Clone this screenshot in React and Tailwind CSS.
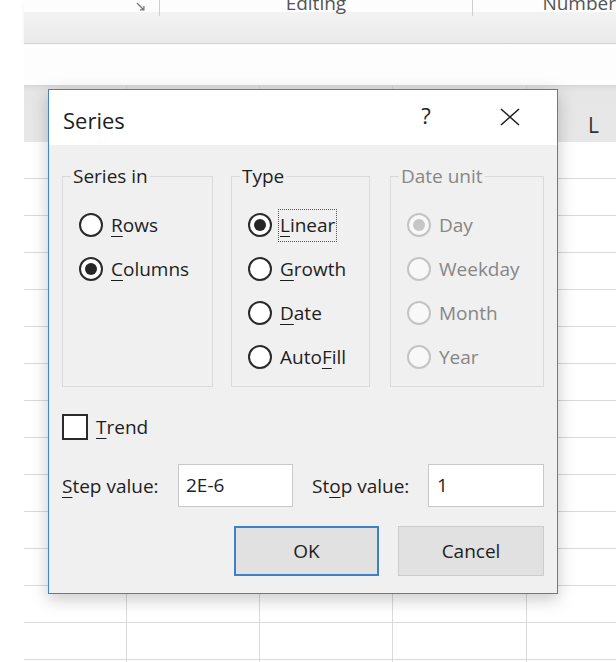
import React from 'react'

const cols = ['w-[103px]', 'w-[133px]', 'w-[133px]', 'w-[134px]']

function Radio({ checked, disabled }) {
  return (
    <span
      className={`flex h-[24px] w-[24px] shrink-0 items-center justify-center rounded-full border-2 ${
        disabled ? 'border-[#c4c4c4] bg-[#f8f8f8]' : 'border-[#2a2a2a] bg-white'
      }`}
    >
      {checked && (
        <span className={`h-[12px] w-[12px] rounded-full ${disabled ? 'bg-[#c6c6c6]' : 'bg-[#262626]'}`} />
      )}
    </span>
  )
}

function Key({ children }) {
  return <span className="underline decoration-1 underline-offset-[4px]">{children}</span>
}

function Option({ checked, disabled, focus, children }) {
  return (
    <div className="flex h-[44px] items-center gap-[6px]">
      <Radio checked={checked} disabled={disabled} />
      <span
        className={`border px-[1px] leading-[31px] ${focus ? 'border-dotted border-[#555]' : 'border-transparent'} ${
          disabled ? 'text-[#868686]' : 'text-[#1e1e1e]'
        }`}
      >
        {children}
      </span>
    </div>
  )
}

function Group({ title, width, disabled, children }) {
  return (
    <fieldset className={`${width} min-w-0 border border-[#dadada] pb-[7px] pl-[8px]`}>
      <legend className={`px-[2px] leading-[26px] ${disabled ? 'text-[#878787]' : 'text-[#1e1e1e]'}`}>{title}</legend>
      <div className="flex flex-col pl-[8px] pt-[14px]">{children}</div>
    </fieldset>
  )
}

function SeriesDialog() {
  return (
    <div className="absolute left-[48px] top-[89px] w-[510px] border border-[#3f84c8] bg-[#f0f0f0] text-[19px] text-[#1e1e1e] shadow-[0_5px_16px_rgba(0,0,0,0.22)]">
      {/* title bar */}
      <div className="flex h-[55px] items-center bg-white pl-[14px]">
        <span className="pt-[5px] text-[22px] text-[#1e1e1e]">Series</span>
        <span className="flex-1" />
        <span className="w-[12px] pb-[5px] text-center text-[22px] text-[#222]">?</span>
        <span className="w-[68px]" />
        <svg width="20" height="18" viewBox="0 0 20 18" className="mb-[2px] mr-[37px]">
          <path d="M1 1 L19 17 M19 1 L1 17" stroke="#222" strokeWidth="1.6" fill="none" />
        </svg>
      </div>

      <div className="flex flex-col pb-[17px] pl-[13px] pr-[13px] pt-[18px]">
        <div className="flex items-stretch">
          <Group title="Series in" width="w-[151px]">
            <Option>
              <Key>R</Key>ows
            </Option>
            <Option checked>
              <Key>C</Key>olumns
            </Option>
          </Group>
          <div className="w-[18px]" />
          <Group title="Type" width="w-[139px]">
            <Option checked focus>
              <Key>L</Key>inear
            </Option>
            <Option>
              <Key>G</Key>rowth
            </Option>
            <Option>
              <Key>D</Key>ate
            </Option>
            <Option>
              Auto<Key>F</Key>ill
            </Option>
          </Group>
          <div className="w-[20px]" />
          <Group title="Date unit" width="w-[154px]" disabled>
            <Option checked disabled>
              Day
            </Option>
            <Option disabled>Weekday</Option>
            <Option disabled>Month</Option>
            <Option disabled>Year</Option>
          </Group>
        </div>

        <div className="mt-[27px] flex items-center gap-[8px]">
          <span className="h-[26px] w-[26px] border-2 border-[#2a2a2a] bg-white" />
          <span className="leading-[26px]">
            <Key>T</Key>rend
          </span>
        </div>

        <div className="mt-[24px] flex items-center">
          <span className="w-[116px] leading-[26px]">
            <Key>S</Key>tep value:
          </span>
          <div className="flex h-[43px] w-[115px] items-center border border-[#c8c8c8] bg-white pl-[7px]">2E-6</div>
          <span className="w-[19px]" />
          <span className="w-[116px] leading-[26px]">
            St<Key>o</Key>p value:
          </span>
          <div className="flex h-[43px] w-[116px] items-center border border-[#c8c8c8] bg-white pl-[8px]">1</div>
        </div>

        <div className="mt-[19px] flex justify-end gap-[19px]">
          <button className="flex h-[50px] w-[145px] items-center justify-center border-2 border-[#3c80c6] bg-[#e1e1e1] text-[#1e1e1e]">
            OK
          </button>
          <button className="flex h-[50px] w-[146px] items-center justify-center border border-[#cccccc] bg-[#e1e1e1] text-[#1e1e1e]">
            Cancel
          </button>
        </div>
      </div>
    </div>
  )
}

export default function App() {
  const rows = Array.from({ length: 15 }, (_, i) => i)

  return (
    <div className="relative h-[662px] w-[616px] overflow-hidden bg-white font-['Open_Sans',sans-serif]">
      <div className="ml-[24px] flex flex-col">
        {/* ribbon remains */}
        <div className="h-[44px] border-b border-[#d2d2d2] bg-[linear-gradient(to_bottom,#fdfdfd_0px,#fdfdfd_12px,#f3f3f3_12px,#e9e9e9_43px)] shadow-[0_2px_3px_rgba(0,0,0,0.07)]">
          <div className="h-[16px] overflow-hidden">
            <div className="-mt-[10px] flex h-[26px] items-center text-[19px] leading-[26px] text-[#555]">
              <span className="w-[112px]" />
              <svg width="12" height="12" viewBox="0 0 12 12" className="mt-[8px]">
                <path d="M2 2 L9 9 M5 9 L9 9 L9 5" stroke="#777" strokeWidth="1.3" fill="none" />
              </svg>
              <span className="w-[12px]" />
              <span className="h-[26px] w-px bg-[#cfcfcf]" />
              <span className="w-[315px] text-center">Editing</span>
              <span className="h-[26px] w-px bg-[#cfcfcf]" />
              <span className="w-[70px]" />
              <span className="whitespace-nowrap">Number</span>
            </div>
          </div>
        </div>

        <div className="h-[41px] bg-[#fdfdfd]" />

        {/* column headers */}
        <div className="flex h-[57px] border-t border-[#d6d6d6] bg-[linear-gradient(to_bottom,#dcdcdc_0px,#e6e6e6_6px,#e7e7e7_100%)] text-[21px] text-[#333]">
          {cols.map((w, i) => (
            <div key={i} className={`${w} shrink-0 border-r border-[#d0d0d0]`} />
          ))}
          <div className="w-[133px] shrink-0 pt-[24px] text-center leading-[30px]">L</div>
        </div>

        {/* cells */}
        {rows.map((r) => (
          <div key={r} className="flex h-[37px] border-b border-[#dadada]">
            {cols.map((w, i) => (
              <div key={i} className={`${w} shrink-0 border-r border-[#dadada]`} />
            ))}
            <div className="flex-1" />
          </div>
        ))}
      </div>

      <SeriesDialog />
    </div>
  )
}
